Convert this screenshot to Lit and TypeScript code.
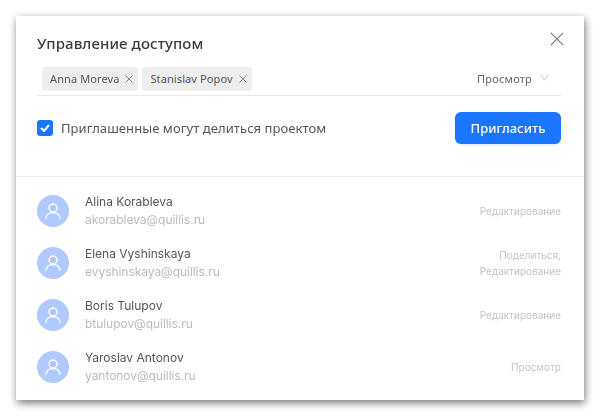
import { LitElement, html, css, svg } from "lit";
import { customElement } from "lit/decorators.js";

const users = [
  { name: "Alina Korableva", email: "akorableva@quillis.ru", role: ["Редактирование"] },
  { name: "Elena Vyshinskaya", email: "evyshinskaya@quillis.ru", role: ["Поделиться,", "Редактирование"] },
  { name: "Boris Tulupov", email: "btulupov@quillis.ru", role: ["Редактирование"] },
  { name: "Yaroslav Antonov", email: "yantonov@quillis.ru", role: ["Просмотр"] },
];

const cross = (size: number, color: string, sw: number) => html`<svg width=${size} height=${size} viewBox="0 0 16 16" fill="none" stroke=${color} stroke-width=${(16 / size) * sw} aria-hidden="true">${svg`<path d="M1 1L15 15M15 1L1 15"/>`}</svg>`;

@customElement("app-root")
export class AppRoot extends LitElement {
  static styles = css`
    :host { display: block; width: 600px; height: 416px; background: #fff; padding: 16px; box-sizing: border-box; font-family: "Noto Sans", sans-serif; color: #4f4f4f; overflow: hidden; }
    .card { width: 568px; height: 384px; box-sizing: border-box; background: #fff; box-shadow: 1px 3px 8px rgba(0,0,0,.55); position: relative; opacity: .999; }
    .top { padding: 0 23px 0 21px; box-sizing: border-box; border-bottom: 1px solid #ececec; height: 161px; }
    h1 { margin: 0; padding-top: 17px; font-size: 15px; line-height: 20px; font-weight: 500; color: #3c3c3c; letter-spacing: .1px; }
    .close { position: absolute; top: 16px; right: 20px; width: 14px; height: 14px; display: flex; }
    .invite { display: flex; align-items: center; height: 24px; margin-top: 14px; padding: 0 0 4px 5px; border-bottom: 1px solid #e8e8e8; }
    .chip { display: flex; align-items: center; height: 24px; box-sizing: border-box; padding: 0 5px 1px 8px; margin-right: 4px; gap: 6px; background: #eeeeee; border-radius: 3px; font-size: 11px; letter-spacing: .1px; color: #555; }
    .chip svg { display: block; margin-top: 1px; }
    .perm { margin-left: auto; margin-right: 12px; padding-bottom: 1px; display: flex; align-items: center; gap: 8px; font-size: 11px; letter-spacing: .2px; color: #666; }
    .perm svg { margin-top: -3px; }
    .opts { display: flex; align-items: center; justify-content: space-between; margin-top: 16px; }
    .check { display: flex; align-items: center; gap: 8px; font-size: 13px; letter-spacing: .08px; color: #555; }
    .box { width: 16px; height: 16px; border-radius: 3px; background: #1a76ff; display: flex; align-items: center; justify-content: center; }
    button { width: 106px; height: 32px; border: 0; border-radius: 6px; background: #1a76ff; color: #fff; font: 500 13px "Noto Sans", sans-serif; box-shadow: 0 1px 3px rgba(26,118,255,.2); padding: 0 0 1px; }
    .list { padding: 18px 23px 0 21px; display: flex; flex-direction: column; gap: 20px; font-family: Inter, sans-serif; }
    .row { display: flex; align-items: center; height: 32px; }
    .ava { width: 32px; height: 32px; border-radius: 50%; background: #b0c9ff; display: flex; align-items: center; justify-content: center; flex: none; }
    .who { margin-left: 16px; }
    .name { font-size: 12px; line-height: 18px; color: #555; }
    .mail { font-size: 12px; line-height: 18px; color: #bbb; letter-spacing: -.04px; }
    .role { margin-left: auto; text-align: right; font-size: 10px; line-height: 16px; color: #c4c4c4; }
  `;

  render() {
    return html`<div class="card">
      <div class="top">
        <h1>Управление доступом</h1>
        <div class="close">${cross(14, "#777", 1.2)}</div>
        <div class="invite">
          <div class="chip">Anna Moreva ${cross(8, "#888", 1)}</div>
          <div class="chip">Stanislav Popov ${cross(8, "#888", 1)}</div>
          <div class="perm">Просмотр
            <svg width="9" height="7" viewBox="0 0 9 7" fill="none" stroke="#c4c4c4"><path d="M.5.5L4.500 6.200 8.500.5"/></svg>
          </div>
        </div>
        <div class="opts">
          <label class="check"><span class="box"><svg width="10" height="8" viewBox="0 0 10 8" fill="none" stroke="#fff" stroke-width="2"><path d="M1 4l3 3 5-6"/></svg></span>Приглашенные могут делиться проектом</label>
          <button>Пригласить</button>
        </div>
      </div>
      <div class="list">
        ${users.map((u) => html`<div class="row">
          <div class="ava"><svg width="16" height="17" viewBox="0 0 16 17" fill="none" stroke="#fff" stroke-width="1.3"><circle cx="8" cy="5" r="4"/><path d="M1 16c0-4 3-6.500 7-6.500s7 2.500 7 6.500"/></svg></div>
          <div class="who"><div class="name">${u.name}</div><div class="mail">${u.email}</div></div>
          <div class="role">${u.role.map((r) => html`<div>${r}</div>`)}</div>
        </div>`)}
      </div>
    </div>`;
  }
}
